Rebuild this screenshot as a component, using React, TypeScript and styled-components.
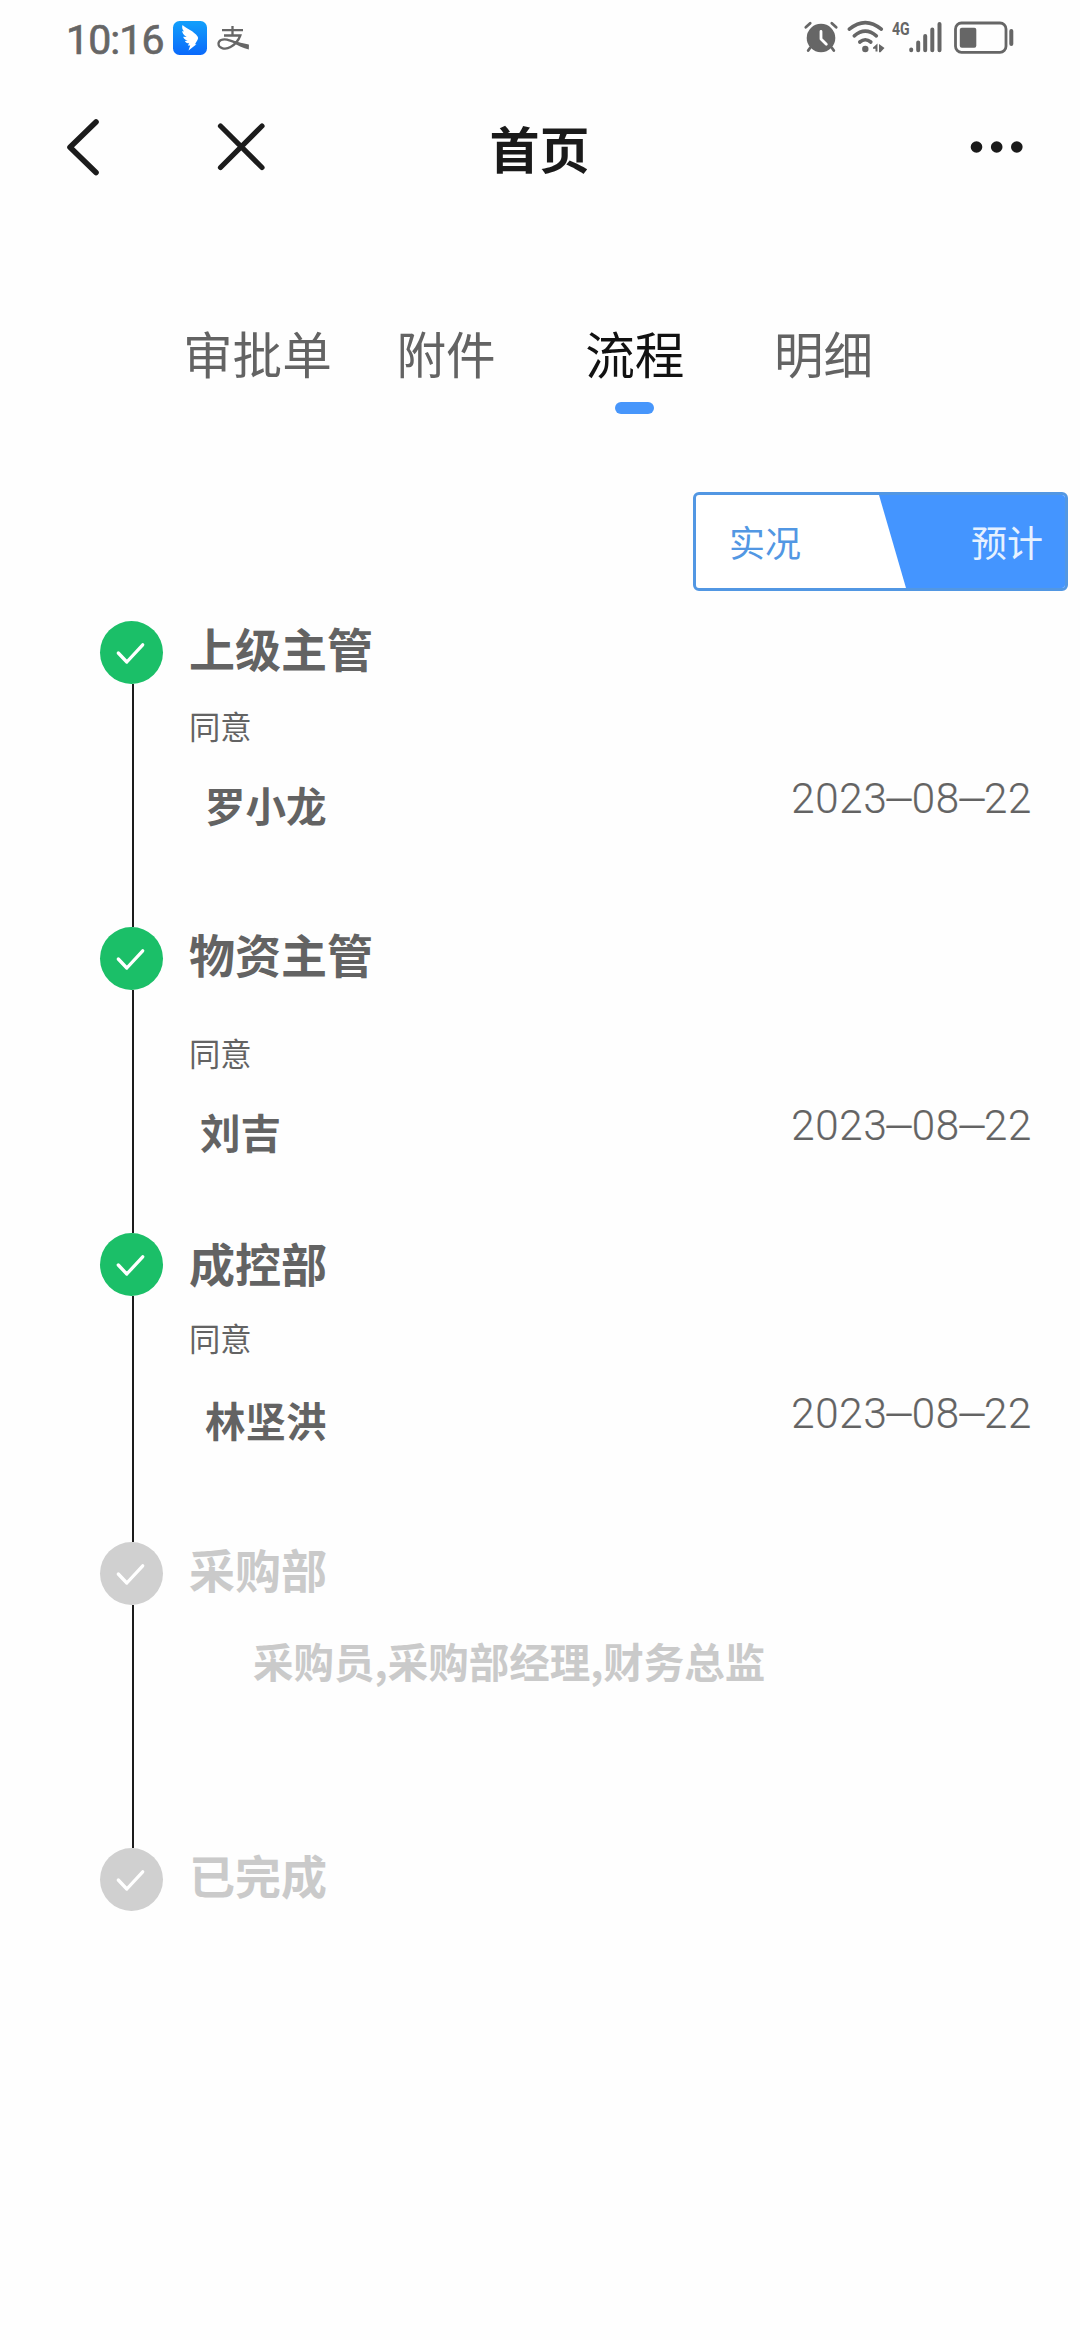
import React from "react";
import styled, { createGlobalStyle } from "styled-components";

const GlobalStyle = createGlobalStyle`
  * { box-sizing: border-box; }
  html, body { margin: 0; padding: 0; background: #fefefe; }
  body { font-family: "Noto Sans CJK SC", sans-serif; color: #636363; }
`;

const Screen = styled.main`
  width: 1080px;
  min-height: 2340px;
  display: flex;
  flex-direction: column;
  background: #fefefe;
  overflow: hidden;
`;

const StatusBar = styled.header`
  height: 76px;
  padding: 0 66px 0 66px;
  display: flex;
  justify-content: space-between;
`;

const StatusGroup = styled.div`
  display: flex;
  align-items: flex-start;
`;

const Clock = styled.span`
  width: 107px;
  margin-top: 16px;
  font: 400 41px/48px Roboto, sans-serif;
  -webkit-text-stroke: 0.7px #666;
  letter-spacing: -0.9px;
  color: #666;
`;

const NetworkLabel = styled.span`
  width: 17px;
  margin-top: 19px;
  font: 700 19px/20px Roboto, sans-serif;
  color: #666;
  transform: scaleX(0.74);
  transform-origin: left;
  white-space: nowrap;
`;

const Icon = styled.svg<{ $left?: number; $top?: number }>`
  display: block;
  flex: none;
  overflow: visible;
  margin-left: ${(p) => p.$left ?? 0}px;
  margin-top: ${(p) => p.$top ?? 0}px;
`;

const NavBar = styled.nav`
  height: 140px;
  padding: 0 55px 0 66px;
  display: grid;
  grid-template-columns: 240px 1fr 240px;
`;

const NavActions = styled.div<{ $end?: boolean }>`
  display: flex;
  height: 141px;
  align-items: center;
  justify-content: ${(p) => (p.$end ? "flex-end" : "flex-start")};
`;

const NavButton = styled.button<{ $left?: number }>`
  border: 0;
  padding: 0;
  background: none;
  margin-left: ${(p) => p.$left ?? 0}px;
`;

const PageTitle = styled.h1`
  margin: 0;
  padding-right: 12px;
  text-align: center;
  font-size: 50px;
  line-height: 142px;
  font-weight: 700;
  color: #1a1a1a;
`;

const Tabs = styled.div`
  margin-top: 106px;
  padding: 0 162px 0 163px;
  display: grid;
  grid-template-columns: repeat(4, 1fr);
`;

const Tab = styled.div<{ $active?: boolean }>`
  display: flex;
  flex-direction: column;
  align-items: center;
  height: 92px;
  font-size: 49.6px;
  line-height: 60px;
  color: ${(p) => (p.$active ? "#111" : "#636363")};
`;

const TabMark = styled.span`
  width: 39px;
  height: 12px;
  margin-top: 20px;
  border-radius: 6px;
  background: #4796fb;
`;

const Toggle = styled.div`
  align-self: flex-end;
  width: 375px;
  height: 99px;
  margin: 78px 12px 30px 0;
  border: 3px solid #5297e3;
  border-radius: 6px;
  display: flex;
  justify-content: space-between;
  background: #fff;
  overflow: hidden;
`;

const ToggleOption = styled.div<{ $filled?: boolean }>`
  width: ${(p) => (p.$filled ? "189px" : "180px")};
  margin-right: ${(p) => (p.$filled ? "-3px" : "0")};
  padding: ${(p) => (p.$filled ? "0 0 0 92px" : "0 0 0 33px")};
  font-size: 36px;
  line-height: 92px;
  color: ${(p) => (p.$filled ? "#e6f1ff" : "#5297e3")};
  background: ${(p) => (p.$filled ? "#4495ff" : "transparent")};
  clip-path: ${(p) => (p.$filled ? "polygon(0 0, 100% 0, 100% 100%, 27px 100%)" : "none")};
`;

const Steps = styled.ol`
  list-style: none;
  margin: 0;
  padding: 0 48px 0 100px;
`;

const Step = styled.li<{ $height: number }>`
  display: grid;
  grid-template-columns: 63px 1fr;
  column-gap: 26px;
  height: ${(p) => p.$height}px;
`;

const Rail = styled.div`
  display: flex;
  flex-direction: column;
  align-items: center;
`;

const Dot = styled.span<{ $done: boolean }>`
  display: flex;
  flex: none;
  width: 63px;
  height: 63px;
  border-radius: 50%;
  background: ${(p) => (p.$done ? "#1bbf68" : "#d0d0d0")};
`;

const RailLine = styled.span`
  flex: 1;
  width: 2px;
  margin-left: 2px;
  background: #1c1c1c;
`;

const StepTitle = styled.h2<{ $top: number; $muted: boolean }>`
  margin: ${(p) => p.$top}px 0 0;
  font-size: 46px;
  line-height: 50px;
  font-weight: 700;
  color: ${(p) => (p.$muted ? "#cacaca" : "#636363")};
`;

const Comment = styled.p<{ $top: number }>`
  margin: ${(p) => p.$top}px 0 0;
  font-size: 31.3px;
  line-height: 40px;
`;

const PersonRow = styled.div<{ $top: number; $indent: number }>`
  display: flex;
  justify-content: space-between;
  margin-top: ${(p) => p.$top}px;
  padding-left: ${(p) => p.$indent}px;
`;

const Person = styled.span<{ $muted: boolean }>`
  font-size: 40.5px;
  line-height: 50px;
  font-weight: 700;
  white-space: nowrap;
  color: ${(p) => (p.$muted ? "#cacaca" : "#636363")};
`;

const StepDate = styled.time`
  display: flex;
  height: 50px;
  font: 300 42px/37px Roboto, sans-serif;
  letter-spacing: 0.75px;
  -webkit-text-stroke: 0.2px #636363;
  color: #636363;
`;

const DateDash = styled.span`
  display: flex;
  justify-content: center;
  width: 24.2px;
  letter-spacing: 0;
  transform: translateY(2px) scaleX(1.22);
`;

type StepData = {
  title: string;
  done: boolean;
  height: number;
  titleTop: number;
  comment?: string;
  commentTop?: number;
  person?: string;
  personTop?: number;
  indent?: number;
  date?: string;
};

const steps: StepData[] = [
  { title: "上级主管", done: true, height: 306, titleTop: 1, comment: "同意", commentTop: 34, person: "罗小龙", personTop: 34, indent: 16, date: "2023–08–22" },
  { title: "物资主管", done: true, height: 306, titleTop: 1, comment: "同意", commentTop: 55, person: "刘吉", personTop: 34, indent: 11, date: "2023–08–22" },
  { title: "成控部", done: true, height: 309, titleTop: 4, comment: "同意", commentTop: 31, person: "林坚洪", personTop: 37, indent: 16, date: "2023–08–22" },
  { title: "采购部", done: false, height: 306, titleTop: 1, person: "采购员,采购部经理,财务总监", personTop: 43, indent: 64 },
  { title: "已完成", done: false, height: 63, titleTop: 1 },
];

const DateText = ({ value }: { value: string }) => (
  <StepDate>
    {value.split("–").map((part, i) => (
      <React.Fragment key={i}>
        {i > 0 && <DateDash>–</DateDash>}
        <span>{part}</span>
      </React.Fragment>
    ))}
  </StepDate>
);

const CheckIcon = () => (
  <Icon width="63" height="63" viewBox="0 0 63 63" fill="none" stroke="#fff" strokeWidth="3.300" strokeLinecap="round" strokeLinejoin="round">
    <path d="M18.300 32 L26.800 41 L42.700 23.800" />
  </Icon>
);

const WingIcon = () => (
  <Icon $top={21} width="34" height="34" viewBox="0 0 34 34">
    <defs>
      <linearGradient id="wing" x1="0" y1="0" x2="0" y2="1">
        <stop offset="0" stopColor="#12a0fb" />
        <stop offset="1" stopColor="#0a69fb" />
      </linearGradient>
    </defs>
    <rect width="34" height="34" rx="6.5" fill="url(#wing)" />
    <path fill="#fff" d="M9.500 4 C13 7.500 21 10 24.600 15.500 Q25.700 17 24.600 18.800 L22 23.300 H23.500 L15.500 29.500 L17.200 24.500 H14.800 L16.200 22.300 C13.800 22.300 12.600 21.500 11.900 20 L14.700 19.500 C12 19 10.600 17.500 10.200 15.800 L13.600 16 C10.500 14 9.300 12.200 9.200 10 L11 10.500 C9 8.300 8.800 6 9.500 4Z" />
  </Icon>
);

const PayIcon = () => (
  <Icon $left={10} $top={26} width="32" height="24" viewBox="0 0 32 24" fill="none" stroke="#666" strokeWidth="2.3">
    <path d="M5 4.200 H26 M15.500 0 V9.500 M7 9.500 H23.300 C21.500 14.500 18 18.500 13.500 21 C8.500 24 1.500 22.500 1.500 17.800 C1.500 14.300 5.500 12.600 10 13.600 C16 15 23 19 31.500 20.500" />
    <path fill="#666" stroke="none" d="M18 15.500 L31.800 18.500 V23.500 C26 22 21 19.500 17 17.200Z" />
  </Icon>
);

const AlarmIcon = () => (
  <Icon $top={21} width="34" height="32" viewBox="0 0 34 32" fill="none" strokeLinecap="round">
    <circle cx="17" cy="17" r="14.300" fill="#666" />
    <path stroke="#666" strokeWidth="2.800" d="M1.800 6.200 L6.200 2.300 M27.800 2.300 L32.200 6.200 M6 27 L4.200 29.500 M28 27 L29.800 29.500" />
    <path stroke="#fff" strokeWidth="2.800" strokeLinejoin="round" d="M17 10.500 V18 L22.300 23.300" />
  </Icon>
);

const WifiIcon = () => (
  <Icon $left={9} $top={21} width="38" height="32" viewBox="0 0 38 32" fill="none" stroke="#666" strokeWidth="3.600" strokeLinecap="round">
    <path d="M2.300 8.200 Q18.300 -5 34.300 8.200 M7.300 14.800 Q18.300 5.500 29.300 14.800 M12.800 21 Q18.300 16.500 23.800 21" />
    <circle cx="18.300" cy="28" r="3.200" fill="#666" stroke="none" />
    <path fill="#666" stroke="none" d="M26 26.500 L30.500 22.500 V30.500 H28.500 V27.800 H26Z M32 23 L37.500 27 L33.500 31.300 H32Z" />
  </Icon>
);

const SignalIcon = () => (
  <Icon $top={21} width="33" height="32" viewBox="0 0 33 32" stroke="#666" strokeWidth="4" strokeLinecap="round">
    <path d="M2.200 28.500 V29.200 M9.200 21.500 V29.200 M16.200 15 V29.200 M23.300 8.500 V29.200 M30.500 3 V29.200" />
  </Icon>
);

const BatteryIcon = () => (
  <Icon $left={12} $top={21} width="60" height="33" viewBox="0 0 60 33">
    <rect x="1.500" y="2" width="50.500" height="29.300" rx="6" fill="none" stroke="#666" strokeWidth="2.800" />
    <rect x="5.800" y="6.800" width="16.500" height="20" rx="2" fill="#666" />
    <rect x="55.300" y="8" width="4" height="17" rx="2" fill="#666" />
  </Icon>
);

export default function App() {
  return (
    <Screen>
      <GlobalStyle />
      <StatusBar>
        <StatusGroup>
          <Clock>10:16</Clock>
          <WingIcon />
          <PayIcon />
        </StatusGroup>
        <StatusGroup>
          <AlarmIcon />
          <WifiIcon />
          <Icon width="7" height="1" />
          <NetworkLabel>4G</NetworkLabel>
          <SignalIcon />
          <BatteryIcon />
        </StatusGroup>
      </StatusBar>

      <NavBar>
        <NavActions>
          <NavButton aria-label="返回">
            <Icon width="34" height="58" viewBox="0 0 34 58" fill="none" stroke="#1c1c1c" strokeWidth="5.600" strokeLinecap="round" strokeLinejoin="round">
              <path d="M30 4 L4 29.200 L30 54.500" />
            </Icon>
          </NavButton>
          <NavButton $left={117} aria-label="关闭">
            <Icon width="48" height="48" viewBox="0 0 48 48" fill="none" stroke="#1c1c1c" strokeWidth="5.200" strokeLinecap="round">
              <path d="M3.500 3 L45 44.500 M45 3 L3.500 44.500" />
            </Icon>
          </NavButton>
        </NavActions>
        <PageTitle>首页</PageTitle>
        <NavActions $end>
          <NavButton aria-label="更多">
            <Icon width="56" height="14" viewBox="0 0 56 14" fill="#1a1a1a">
              <circle cx="7.500" cy="7" r="5.800" />
              <circle cx="27.700" cy="7" r="5.800" />
              <circle cx="47.800" cy="7" r="5.800" />
            </Icon>
          </NavButton>
        </NavActions>
      </NavBar>

      <Tabs>
        <Tab>审批单</Tab>
        <Tab>附件</Tab>
        <Tab $active>
          流程
          <TabMark />
        </Tab>
        <Tab>明细</Tab>
      </Tabs>

      <Toggle>
        <ToggleOption>实况</ToggleOption>
        <ToggleOption $filled>预计</ToggleOption>
      </Toggle>

      <Steps>
        {steps.map((s, i) => (
          <Step key={s.title} $height={s.height}>
            <Rail>
              <Dot $done={s.done}>
                <CheckIcon />
              </Dot>
              {i < steps.length - 1 && <RailLine />}
            </Rail>
            <div>
              <StepTitle $top={s.titleTop} $muted={!s.done}>{s.title}</StepTitle>
              {s.comment && <Comment $top={s.commentTop ?? 0}>{s.comment}</Comment>}
              {s.person && (
                <PersonRow $top={s.personTop ?? 0} $indent={s.indent ?? 0}>
                  <Person $muted={!s.done}>{s.person}</Person>
                  {s.date && <DateText value={s.date} />}
                </PersonRow>
              )}
            </div>
          </Step>
        ))}
      </Steps>
    </Screen>
  );
}
